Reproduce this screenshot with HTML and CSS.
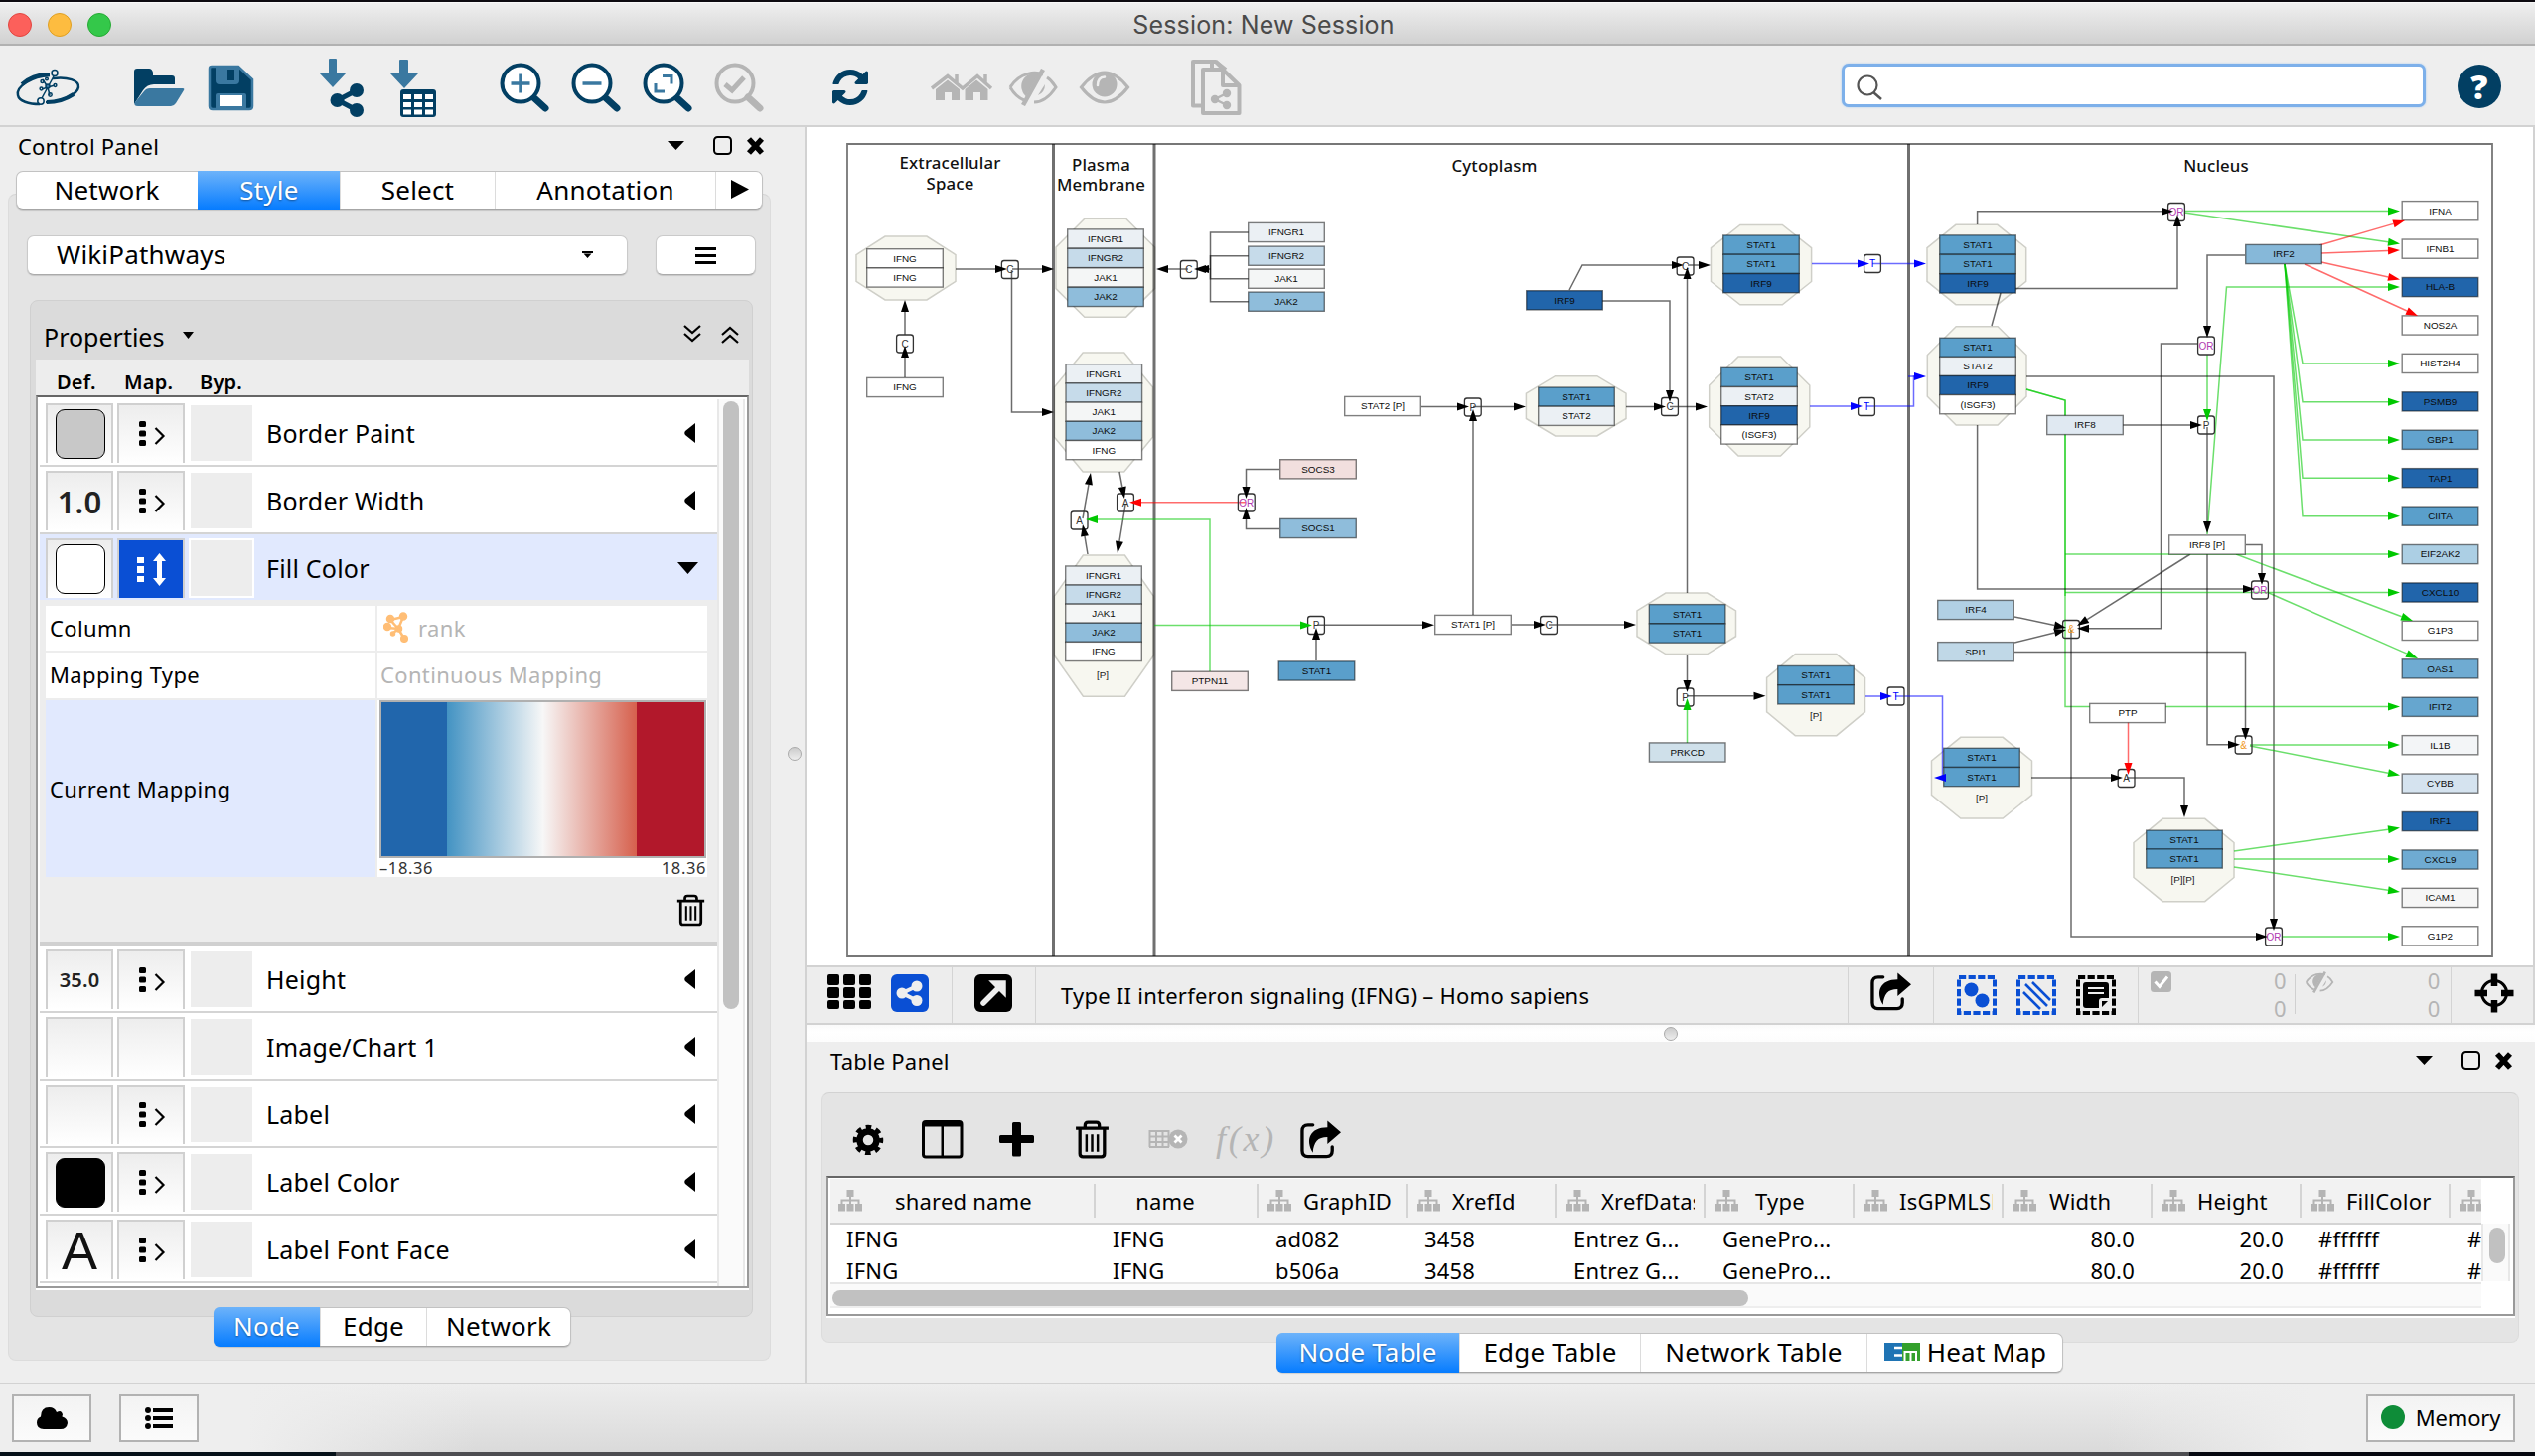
FILE: index.html
```html
<!DOCTYPE html>
<html lang="en">
<head>
<meta charset="utf-8">
<title>Session: New Session</title>
<link rel="stylesheet" href="styles.css">
</head>
<body>
<svg class="defs" aria-hidden="true">
  <symbol id="share" viewBox="0 0 42 39"><path d="M13 4.500H8Q2 4.500 2 10.500V31Q2 37 8 37H27Q33 37 33 31V27" fill="none" stroke="currentColor" stroke-width="3.400" stroke-linecap="round"/><path d="M28 0L42 12 28 24V17C18 17 14 22 13 33 5 20 10 7 28 7z" fill="currentColor"/></symbol>
  <symbol id="trash" viewBox="0 0 34 38"><path d="M1 8H33M10 7V5Q10 2 13 2H21Q24 2 24 5V7M5 9V33Q5 36 8 36H26Q29 36 29 33V9" fill="none" stroke="currentColor" stroke-width="3.200"/><path d="M11.500 14V31M17 14V31M22.500 14V31" stroke="currentColor" stroke-width="2.400"/></symbol>
  <symbol id="eyeoff" viewBox="0 0 50 38"><path d="M2 19C12 3 28 3 35 6M39 9C44 12 46 16 48 19 40 31 32 34 26 34M2 19C6 26 11 30 16 32" fill="none" stroke="currentColor" stroke-width="3"/><path d="M31 5C18 3 11 13 14 22 15 26 18 28 18 28z" fill="currentColor"/><path d="M35 1L15 37" stroke="currentColor" stroke-width="4.500"/><path d="M37 16Q37 24 30 27z" fill="currentColor"/></symbol>
  <symbol id="tree" viewBox="0 0 24 22"><path d="M8.500 0h7v7h-7zM0 14h7v7.500H0zM8.500 14h7v7.500h-7zM17 14h7v7.500h-7zM11 7h2v7h-2z" fill="#b4b4b4"/><path d="M3.500 14V10.500H20.500V14" fill="none" stroke="#b4b4b4" stroke-width="2"/></symbol>
  <symbol id="map" viewBox="0 0 27 26"><path d="M1.500 0h4q1.500 0 1.500 1.500v3q0 1.500-1.500 1.500h-4Q0 6 0 4.500v-3Q0 0 1.500 0zM1.500 9.500h4Q7 9.500 7 11v3q0 1.500-1.500 1.500h-4Q0 15.500 0 14v-3q0-1.500 1.500-1.500zM1.500 19h4Q7 19 7 20.500v3Q7 25 5.500 25h-4Q0 25 0 23.500v-3Q0 19 1.500 19z"/><path d="M16.500 7l8 8-8 8" fill="none" stroke="#000" stroke-width="2.200"/></symbol>
  <symbol id="left" viewBox="0 0 11 20"><path d="M11 0V20L1 12Q-.5 10 1 8z"/></symbol>
  <symbol id="dock" viewBox="0 0 98 22"><path d="M0 6H17L8.500 15z"/><rect x="47" y="2" width="17" height="17" rx="3.500" fill="none" stroke="#000" stroke-width="2"/><path d="M82 4L95 18M95 4L82 18" stroke="#000" stroke-width="5.500"/></symbol>
</svg>

<div class="desk-top"></div>
<header class="titlebar"><div class="lights"><i class="r"></i><i class="y"></i><i class="g"></i></div><span>Session: New Session</span></header>

<nav class="toolbar">
  <svg class="ic" style="width:68px;margin-left:14px" viewBox="14 46 68 80"><g fill="none" stroke="#023f63"><path d="M50 76C32 77 16 87 18 96 19 102 29 105 40 105" stroke-width="2.500"/><path d="M53 79C68 77 80 81 79 88 78 95 62 103 46 103" stroke-width="2.500"/><path d="M22 85Q34 74 50 75M74 95Q62 103 47 103" stroke-width="4"/><g stroke-width="1.500"><path d="M54 77L42 99M48 88L43 80M48 88L50 96M48 88L55 86M48 88L42 90"/><circle cx="55" cy="73.500" r="3"/><circle cx="41" cy="102" r="3.200"/><circle cx="48" cy="87" r="2" fill="#3a78a0"/><circle cx="42.500" cy="82" r="1.500"/><circle cx="47" cy="79.500" r="1.300"/><circle cx="50.500" cy="95.500" r="1.700"/><circle cx="55.500" cy="86" r="1.400"/><circle cx="41.500" cy="89.500" r="1.400"/></g></g></svg>
  <svg class="ic" style="width:60px;margin-left:48px" viewBox="130 46 60 80"><path d="M135 105V72q0-3 3-3h12q3 0 4 4v3h19q3 0 3 3v6h-21q-7 0-11 6z" fill="#023f63"/><path d="M145 92q2-3 6-3h33q2 0 1 2l-8 13q-2 3-5 3h-33q-5 0-3-4z" fill="#3a78a0"/></svg>
  <svg class="ic" style="width:54px;margin-left:16px" viewBox="206 46 54 80"><path d="M213 67H240L254 80V107Q254 110 251 110H214Q211 110 211 107V69Q211 67 213 67z" fill="#023f63" stroke="#3a78a0" stroke-width="2.500"/><path d="M217 67H241V81Q241 85 237 85H221Q217 85 217 81z" fill="#3a78a0"/><path d="M229 70h7v11h-7z" fill="#023f63"/><path d="M217 110V96Q217 94 219 94H246Q248 94 248 96V110z" fill="#3a78a0"/><path d="M221 96h23v11h-23z" fill="#fff"/></svg>
  <svg class="ic" style="width:52px;margin-left:58px" viewBox="318 46 52 80"><path d="M331 60q0-1 1-1h6q1 0 1 1v13h10l-14 15-14-15h10z" fill="#3a78a0"/><g fill="#023f63"><circle cx="359" cy="91" r="7"/><circle cx="339.500" cy="101" r="7"/><circle cx="359" cy="111" r="7"/></g><path d="M359 91L340 101 359 111" fill="none" stroke="#023f63" stroke-width="5"/></svg>
  <svg class="ic" style="width:50px;margin-left:22px" viewBox="392 46 50 80"><path d="M402 61q0-1 1-1h7q1 0 1 1v13h10l-14 15-14-15h9z" fill="#3a78a0"/><rect x="403" y="90" width="36" height="28" rx="3" fill="#023f63"/><path d="M406 95h8v5h-8zM417 95h8v5h-8zM428 95h8v5h-8zM406 103h8v5h-8zM417 103h8v5h-8zM428 103h8v5h-8zM406 110.500h8v5h-8zM417 110.500h8v5h-8zM428 110.500h8v5h-8z" fill="#fff"/></svg>
  <svg class="ic" style="width:56px;margin-left:58px" viewBox="500 46 56 80"><path d="M537 98L549 109" stroke="#023f63" stroke-width="7" stroke-linecap="round"/><circle cx="524" cy="84" r="18.500" fill="#fff" stroke="#023f63" stroke-width="4"/><path d="M514.500 84h19M524 74.500v19" stroke="#3a78a0" stroke-width="3.500"/></svg>
  <svg class="ic" style="width:56px;margin-left:16px" viewBox="500 46 56 80"><path d="M537 98L549 109" stroke="#023f63" stroke-width="7" stroke-linecap="round"/><circle cx="524" cy="84" r="18.500" fill="#fff" stroke="#023f63" stroke-width="4"/><path d="M514.500 84h19" stroke="#3a78a0" stroke-width="3.500"/></svg>
  <svg class="ic" style="width:56px;margin-left:16px" viewBox="500 46 56 80"><path d="M537 98L549 109" stroke="#023f63" stroke-width="7" stroke-linecap="round"/><circle cx="524" cy="84" r="18.500" fill="#fff" stroke="#023f63" stroke-width="4"/><path d="M523 76.500h9v8M525 92h-9v-8" fill="none" stroke="#3a78a0" stroke-width="3"/></svg>
  <svg class="ic" style="width:56px;margin-left:16px" viewBox="500 46 56 80"><path d="M537 98L549 109" stroke="#b5b5b5" stroke-width="7" stroke-linecap="round"/><circle cx="524" cy="84" r="18.500" fill="none" stroke="#b5b5b5" stroke-width="4"/><path d="M514 85l7 6 12-13" fill="none" stroke="#b5b5b5" stroke-width="5"/></svg>
  <svg class="ic" style="width:44px;margin-left:62px" viewBox="834 46 44 80"><path transform="translate(838 70) scale(.02344)" fill="#023f63" d="M1511 928q0 5-1 7q-64 268-268 434.500T764 1536q-146 0-282.500-55T238 1324l-129 129q-19 19-45 19t-45-19T0 1408V960q0-26 19-45t45-19h448q26 0 45 19t19 45t-19 45l-137 137q71 66 161 102t187 36q134 0 250-65t186-179q11-17 53-117q8-23 30-23h192q13 0 22.500 9.500t9.500 22.500zm25-800v448q0 26-19 45t-45 19h-448q-26 0-45-19t-19-45t19-45l138-138Q969 256 768 256q-134 0-250 65T332 500q-11 17-53 117q-8 23-30 23H50q-13 0-22.500-9.500T18 608v-7q65-268 270-434.500T768 0q146 0 284 55.500T1297 212l130-129q19-19 45-19t45 19t19 45z"/></svg>
  <svg class="ic" style="width:68px;margin-left:56px" viewBox="934 46 68 80"><path d="M938 89L954 76.500 969 89 984 76.500 998 89M963 83v-8M992 83v-8" fill="none" stroke="#b5b5b5" stroke-width="3.500"/><path d="M942 90l12-9.500L966 90v11h-8v-8h-7v8h-9zM971.500 90L983 80.500 994.500 90v11H987v-8h-7v8h-8.500z" fill="#b5b5b5"/></svg>
  <svg class="ic grey" style="width:56px;margin-left:10px" viewBox="1012 46 56 80"><use href="#eyeoff" x="1015" y="69" width="50" height="38"/></svg>
  <svg class="ic" style="width:56px;margin-left:16px" viewBox="1084 46 56 80"><path d="M1088.500 88Q1112 58 1135.500 88 1112 118 1088.500 88z" fill="none" stroke="#b5b5b5" stroke-width="3.200"/><circle cx="1112" cy="85" r="12.500" fill="#b5b5b5"/><path d="M1105 86q0-8 7-8.500" fill="none" stroke="#eee" stroke-width="2.500" stroke-linecap="round"/></svg>
  <svg class="ic" style="width:56px;margin-left:56px" viewBox="1196 46 56 80"><g fill="none" stroke="#b5b5b5" stroke-width="4" stroke-linejoin="round"><path d="M1209 106.500h-8V62h23l6 6M1220 62v7"/><path d="M1211 70h20l16.500 16V114H1211zM1231 70v16h16M1224 62l10 8"/></g><g fill="#b5b5b5"><circle cx="1235" cy="94" r="4.200"/><circle cx="1223" cy="100" r="4.200"/><circle cx="1235" cy="106" r="4.200"/></g><path d="M1235 94l-12 6 12 6" fill="none" stroke="#b5b5b5" stroke-width="2.500"/></svg>
  <div class="search"><svg width="27" height="27" viewBox="0 0 27 27"><circle cx="11" cy="11" r="9.500" fill="none" stroke="#555" stroke-width="2.200"/><path d="M17 18l8 7" stroke="#555" stroke-width="2.500"/></svg></div>
  <div class="help">?</div>
</nav>

<main>
<section class="left">
  <div class="phead"><span>Control Panel</span><svg width="98" height="22"><use href="#dock"/></svg></div>
  <div class="seg main-tabs"><b style="width:183px">Network</b><b class="on" style="width:143px">Style</b><b style="width:156px">Select</b><b style="width:222px">Annotation</b><b style="width:48px"><svg width="18" height="19"><path d="M0 0V19L18 9.500z"/></svg></b></div>
  <div class="group">
    <div class="combo-row"><div class="combo"><span>WikiPathways</span><svg width="11" height="7"><path d="M0 0H11V2H0zM1.500 2.500H9.500L5.500 7z"/></svg></div><div class="burger"><i></i><i></i><i></i></div></div>
    <div class="props">
      <div class="props-head"><span>Properties</span><svg width="11" height="7"><path d="M0 0H11L5.500 7z"/></svg><svg class="chev" width="60" height="20"><path d="M2 1l8 7 8-7M2 9l8 7 8-7M40 10l8-7 8 7M40 18l8-7 8 7" fill="none" stroke="#000" stroke-width="2.200"/></svg></div>
      <div class="cols"><span style="width:68px">Def.</span><span style="width:76px">Map.</span><span style="width:60px">Byp.</span></div>
      <div class="list">
        <div class="rows">
          <div class="row"><span class="cell"><i class="sw" style="background:#c8c8c8"></i></span><span class="cell"><svg width="27" height="26"><use href="#map"/></svg></span><span class="byp"></span><em>Border Paint</em><svg class="tri" width="11" height="20"><use href="#left"/></svg></div>
          <div class="row"><span class="cell big">1.0</span><span class="cell"><svg width="27" height="26"><use href="#map"/></svg></span><span class="byp"></span><em>Border Width</em><svg class="tri" width="11" height="20"><use href="#left"/></svg></div>
          <div class="row sel"><span class="cell"><i class="sw" style="background:#fff"></i></span><span class="cell blue"><svg width="29" height="33" fill="#fff"><path d="M0 4h7v6H0zM0 13h7v7H0zM0 23h7v6H0zM22.500 0L29 8H25V25h4l-6.500 8L16 25h4V8H16z"/></svg></span><span class="byp"></span><em>Fill Color</em><svg class="tri down" width="21" height="12"><path d="M0 0H21L10.500 12z"/></svg></div>
          <div class="detail">
            <div class="dt">
              <span>Column</span><span class="dim"><svg width="26" height="31" stroke="#ffbe76" stroke-width="2.500" fill="#ffbe76"><path d="M15 17L7 8 20 5 15 17 4 16M15 17L9 22M15 17L21 27" fill="none"/><circle cx="7" cy="7" r="3"/><circle cx="20" cy="4.500" r="3"/><circle cx="4" cy="15" r="3"/><circle cx="15.500" cy="17" r="2.500"/><circle cx="9.500" cy="22" r="1.500"/><circle cx="21" cy="27" r="2.800"/></svg>rank</span>
              <span>Mapping Type</span><span class="dim">Continuous Mapping</span>
              <span class="cur">Current Mapping</span><span class="grad"><i></i><u><s>–18.36</s><s>18.36</s></u></span>
            </div>
            <svg class="bin" width="29" height="33"><use href="#trash"/></svg>
          </div>
          <div class="row"><span class="cell mid">35.0</span><span class="cell"><svg width="27" height="26"><use href="#map"/></svg></span><span class="byp"></span><em>Height</em><svg class="tri" width="11" height="20"><use href="#left"/></svg></div>
          <div class="row"><span class="cell"></span><span class="cell"></span><span class="byp"></span><em>Image/Chart 1</em><svg class="tri" width="11" height="20"><use href="#left"/></svg></div>
          <div class="row"><span class="cell"></span><span class="cell"><svg width="27" height="26"><use href="#map"/></svg></span><span class="byp"></span><em>Label</em><svg class="tri" width="11" height="20"><use href="#left"/></svg></div>
          <div class="row"><span class="cell"><i class="sw" style="background:#000"></i></span><span class="cell"><svg width="27" height="26"><use href="#map"/></svg></span><span class="byp"></span><em>Label Color</em><svg class="tri" width="11" height="20"><use href="#left"/></svg></div>
          <div class="row"><span class="cell face">A</span><span class="cell"><svg width="27" height="26"><use href="#map"/></svg></span><span class="byp"></span><em>Label Font Face</em><svg class="tri" width="11" height="20"><use href="#left"/></svg></div>
        </div>
        <div class="vbar"><i></i></div>
      </div>
    </div>
  </div>
  <div class="seg sub-tabs"><b class="on" style="width:107px">Node</b><b style="width:107px">Edge</b><b style="width:145px">Network</b></div>
</section>
<div class="knob side"></div>

<section class="right">
  <svg id="network" class="net" viewBox="812 128 1738 844"></svg>
  <div class="netbar">
    <div class="nb" style="width:147px;padding-left:21px"><svg width="103" height="38"><path d="M2 0h8q2 0 2 2v7q0 2-2 2H2Q0 11 0 9V2Q0 0 2 0zM18 0h8q2 0 2 2v7q0 2-2 2h-8q-2 0-2-2V2q0-2 2-2zM34 0h8q2 0 2 2v7q0 2-2 2h-8q-2 0-2-2V2q0-2 2-2zM2 13h8q2 0 2 2v7q0 2-2 2H2q-2 0-2-2v-7q0-2 2-2zM18 13h8q2 0 2 2v7q0 2-2 2h-8q-2 0-2-2v-7q0-2 2-2zM34 13h8q2 0 2 2v7q0 2-2 2h-8q-2 0-2-2v-7q0-2 2-2zM2 26h8q2 0 2 2v5q0 2-2 2H2q-2 0-2-2v-5q0-2 2-2zM18 26h8q2 0 2 2v5q0 2-2 2h-8q-2 0-2-2v-5q0-2 2-2zM34 26h8q2 0 2 2v5q0 2-2 2h-8q-2 0-2-2v-5q0-2 2-2z"/><rect x="64" width="38" height="38" rx="6" fill="#0a4fd4"/><g fill="#eee"><circle cx="90" cy="12" r="5.500"/><circle cx="75" cy="19" r="5.500"/><circle cx="90" cy="26.500" r="5.500"/></g><path d="M90 12L75 19 90 26.500" fill="none" stroke="#eee" stroke-width="4"/></svg></div>
    <div class="nb" style="width:84px;padding-left:22px"><svg width="38" height="38"><rect width="38" height="38" rx="6"/><path d="M9 29L25 13" stroke="#eee" stroke-width="5.500" stroke-linecap="round"/><path d="M16 7H31V22z" fill="#eee" stroke="#eee" stroke-width="1.500"/></svg></div>
    <div class="nb name">Type II interferon signaling (IFNG) – Homo sapiens</div>
    <div class="nb" style="width:86px;padding:0 0 8px 22px"><svg width="41" height="39"><use href="#share"/></svg></div>
    <div class="nb sels" style="width:206px;padding-left:23px">
      <svg width="40" height="40" fill="#0a4fd4"><rect x="2" y="2" width="36" height="36" fill="none" stroke="#0a4fd4" stroke-width="4" stroke-dasharray="7.200 2.400"/><circle cx="14.500" cy="14.500" r="7"/><circle cx="25.500" cy="25.500" r="7"/></svg>
      <svg width="40" height="40"><rect x="2" y="2" width="36" height="36" fill="none" stroke="#0a4fd4" stroke-width="4" stroke-dasharray="7.200 2.400"/><path d="M16 7L34 25M9 9L31 31M7 17L24 34" stroke="#0a4fd4" stroke-width="2.500"/></svg>
      <svg width="40" height="40"><rect x="2" y="2" width="36" height="36" fill="none" stroke="#000" stroke-width="4" stroke-dasharray="7.200 2.400"/><path d="M10 7H30Q33 7 33 10V23H26Q23 23 23 26V33H10Q7 33 7 30V10Q7 7 10 7zM26 32V26H32z"/><path d="M12 13H28M12 18H28" stroke="#eee" stroke-width="2.200"/></svg>
    </div>
    <div class="nb counts" style="width:315px"><svg width="21" height="21"><rect width="21" height="21" rx="3.500" fill="#b5b5b5"/><path d="M4.500 10.500l4.500 5 8-10" fill="none" stroke="#fff" stroke-width="3"/></svg><p>0<br>0</p><i></i><svg class="grey" width="30" height="22"><use href="#eyeoff"/></svg><p class="hid">0<br>0</p></div>
    <div class="nb" style="width:84px;padding-left:23px"><svg width="40" height="40"><circle cx="20" cy="20" r="12.500" fill="none" stroke="#000" stroke-width="3"/><path d="M20 0.500V13M20 27V39.500M.5 20H13M27 20H39.500" stroke="#000" stroke-width="6.500"/></svg></div>
  </div>
  <div class="strip"><div class="knob"></div></div>
  <div class="phead tp"><span>Table Panel</span><svg width="98" height="22"><use href="#dock"/></svg></div>
  <div class="tgroup">
    <div class="tbar">
      <svg width="32" height="32" style="margin-left:26px"><g fill="none" stroke="#000"><circle cx="16" cy="17" r="8.500" stroke-width="6.500"/><circle cx="16" cy="17" r="13" stroke-width="4.500" stroke-dasharray="5.500 4.710" stroke-dashoffset="2.700"/></g></svg>
      <svg width="42" height="39" style="margin-left:38px"><rect x="1.500" y="1.500" width="38.500" height="35.500" rx="2.500" fill="none" stroke="#000" stroke-width="3"/><path d="M1 1H40V6.500H1zM19.500 2h2.500V37h-2.500z"/></svg>
      <svg width="36" height="35" style="margin-left:36px"><path d="M13 1.500q0-1.500 1.500-1.500h6q1.500 0 1.500 1.500V13H33.500q1.500 0 1.500 1.500v5q0 1.500-1.500 1.500H22V33q0 1.500-1.500 1.500h-6Q13 34.500 13 33V21H1.500Q0 21 0 19.500v-5Q0 13 1.500 13H13z"/></svg>
      <svg width="35" height="39" style="margin-left:40px"><use href="#trash"/></svg>
      <svg width="40" height="21" style="margin-left:39px"><path d="M1 2h20M1 7.500h20M1 13h20M1 18h20M1.500 1v17M8 1v17M14.500 1v17M20.500 1v17" stroke="#b5b5b5" stroke-width="2"/><circle cx="30" cy="10" r="9.500" fill="#b5b5b5"/><path d="M26.500 6.500l7 7M33.500 6.500l-7 7" stroke="#fff" stroke-width="2.800"/></svg>
      <span class="fx">f(x)</span>
      <svg width="41" height="39"><use href="#share"/></svg>
    </div>
    <div class="table">
      <div class="tmain">
        <div class="tr th"><span><svg><use href="#tree"/></svg>shared name</span><span class="c2">name</span><span><svg><use href="#tree"/></svg>GraphID</span><span><svg><use href="#tree"/></svg>XrefId</span><span><svg><use href="#tree"/></svg><q>XrefDatas</q></span><span><svg><use href="#tree"/></svg>Type</span><span><svg><use href="#tree"/></svg><q>IsGPMLSh</q></span><span><svg><use href="#tree"/></svg>Width</span><span><svg><use href="#tree"/></svg>Height</span><span><svg><use href="#tree"/></svg>FillColor</span><span><svg><use href="#tree"/></svg></span></div>
        <div class="tr td"><span>IFNG</span><span>IFNG</span><span>ad082</span><span>3458</span><span>Entrez G...</span><span>GenePro...</span><span></span><span class="n">80.0</span><span class="n">20.0</span><span>#ffffff</span><span>#</span></div>
        <div class="tr td"><span>IFNG</span><span>IFNG</span><span>b506a</span><span>3458</span><span>Entrez G...</span><span>GenePro...</span><span></span><span class="n">80.0</span><span class="n">20.0</span><span>#ffffff</span><span>#</span></div>
        <div class="hbar"><i></i></div>
      </div>
      <div class="tside"><div class="tv"><i></i></div></div>
    </div>
  </div>
  <div class="seg table-tabs"><b class="on" style="width:184px">Node Table</b><b style="width:182px">Edge Table</b><b style="width:228px">Network Table</b><b style="width:198px"><svg width="36" height="18"><path d="M0 0h18v18H0z" fill="#1f74b4"/><path d="M18 0h18v18H18z" fill="#33a02c"/><path d="M10 5h8M10 12.500h8" stroke="#fff" stroke-width="2.500"/><path d="M20.500 18V9h11.500v9M26.500 9v9" fill="none" stroke="#fff" stroke-width="2"/></svg>Heat Map</b></div>
</section>
</main>

<footer>
  <div class="sb"><svg width="31" height="23"><path d="M7 22Q0 22 0 15.500 0 11 4 9.500 4 0 12.500 0 18 0 20 5q5-3 6 2.500-.5 1-.5 2Q31 11 31 16q-1 6-7 6z"/></svg></div>
  <div class="sb two"><svg width="29" height="22"><path d="M8 3h20M8 11h20M8 19h20" stroke="#000" stroke-width="4"/><circle cx="3" cy="3" r="3"/><circle cx="3" cy="11" r="3"/><circle cx="3" cy="19" r="3"/></svg></div>
  <div class="sb mem"><i></i>Memory</div>
</footer>
<div class="desk-bottom"></div>
<script src="network.js"></script>
</body>
</html>
```
FILE: styles.css
```css
*{box-sizing:border-box}
body{margin:0;width:2552px;height:1466px;overflow:hidden;display:flex;flex-direction:column;background:#eee;color:#000;font-family:"Noto Sans","Open Sans",sans-serif;font-size:22px;letter-spacing:.2px;line-height:1}
svg{display:block;flex:none}
b,em,i,u,s{font-weight:400;font-style:normal;text-decoration:none}
.defs{display:none}
.grey{color:#b5b5b5}
.desk-top{height:2px;background:#0d0a10;flex:none}
.titlebar{height:44px;flex:none;display:grid;grid-template-columns:1fr auto 1fr;align-items:center;background:linear-gradient(#efefef,#d1d1d1);border-bottom:2px solid #b1b1b1;border-top:1px solid #f8f8f8;padding-right:8px}
.titlebar span{font:25px/1 Inter,sans-serif;color:#4a4a4a;letter-spacing:.15px;padding-top:3px}
.lights{display:flex;gap:16px;padding-left:8px;padding-top:2px}
.lights i{width:24px;height:24px;border-radius:50%;border:1px solid #e14640;background:#fc605b}
.lights .y{background:#fdbc40;border-color:#dfa023}
.lights .g{background:#34c84a;border-color:#27aa35}
.toolbar{height:82px;flex:none;display:flex;align-items:center;border-bottom:2px solid #d2d2d2}
.ic{height:80px}
.search{margin-left:602px;width:588px;height:44px;border:3px solid #7db0ea;border-radius:7px;background:#fff;box-shadow:0 0 2px #9cc4f0;padding:8px 12px}
.help{margin-left:32px;width:44px;height:44px;border-radius:50%;background:#023f63;color:#fff;font:900 34px/44px "Noto Sans",sans-serif;text-align:center;margin-top:2px}
main{display:flex;height:1264px;flex:none}
.left{width:784px;flex:none;display:flex;flex-direction:column}
.phead{height:44px;flex:none;display:flex;justify-content:space-between;align-items:center;padding:0 14px 6px 18px}
.seg{display:flex;flex:none;height:39px;position:relative;z-index:1;border:1px solid #c2c2c2;border-bottom-color:#a6a6a6;border-radius:7px;background:#fff;box-shadow:0 1px 1px #0002;font-size:26px}
.seg b{display:flex;flex:none;align-items:center;justify-content:center;border-left:1px solid #dcdcdc;padding-bottom:2px;gap:7px;white-space:nowrap}
.seg b:first-child{border-left:0;border-radius:6px 0 0 6px;margin-left:-1px}
.seg .on{background:linear-gradient(#6db3fa,#067cff);color:#fff;border-color:transparent;text-shadow:0 1px 2px #0006;margin-top:-1px;margin-bottom:-1px}
.main-tabs{margin-left:16px;width:752px}
.group{margin:-16px 0 0 8px;width:768px;height:1175px;flex:none;background:#e4e4e4;border:1px solid #dcdcdc;border-top-color:#d4d4d4;border-radius:8px;padding-top:41px}
.combo-row{display:flex;gap:28px;padding-left:18px}
.combo,.burger{height:40px;background:#fff;border:1px solid #cacaca;border-bottom-color:#aaa;border-radius:7px;box-shadow:0 1px 1px #0002}
.combo{width:605px;display:flex;align-items:center;justify-content:space-between;padding:0 34px 2px 29px;font-size:26px}
.burger{width:101px;display:flex;flex-direction:column;gap:4px;align-items:center;justify-content:center}
.burger i{width:21px;height:3px;background:#000}
.props{margin:25px 0 0 21px;width:728px;height:1024px;background:#dbdbdb;border:1px solid #d0d0d0;border-radius:8px;padding:0 3px 0 5px}
.props-head{height:59px;display:flex;align-items:center;font-size:25px;letter-spacing:0;padding:13px 7px 0 8px}
.props-head span{margin-right:19px;line-height:30px}
.props-head svg{margin-bottom:4px}
.props-head .chev{margin-left:auto}
.cols{height:36px;background:#ededed;display:flex;font-weight:600;font-size:20px;padding:13px 0 0 21px}
.list{height:899px;border:2px solid #999;border-top-color:#666;background:#fff;display:flex;justify-content:space-between;padding:2px 2px 0 2px;box-shadow:0 2px 0 #fff}
.rows{width:682px;flex:none}
.row{height:68px;border-bottom:2px solid #d4d4d4;padding:4px 22px 2px 6px;display:flex;font-size:26px}
.cell{width:68px;flex:none;margin-right:4px;border:2px solid #d0d0d0;border-bottom:0;background:linear-gradient(#ededed,#fff);display:flex;align-items:center;justify-content:center}
.sw{width:50px;height:50px;border:1.500px solid #000;border-radius:9px;margin-left:1px}
.cell svg{margin-left:2px}
.byp{width:66px;flex:none;border:2px solid #fff;background:#ededed;margin-right:12px}
.row em{align-self:center;font-size:25px;letter-spacing:.2px}
.tri{margin:20px 0 0 auto}
.down{margin:24px -3px 0 auto}
.sel{height:66px;background:#e1e9fe;border:0}
.cell.blue{background:#0a4fd4}
.blue svg{margin:0}
.big{font-weight:600;font-size:31px;color:#222}
.mid{font-weight:600;font-size:20px;color:#222}
.face{font:54px/1 "Liberation Sans",sans-serif;color:#111}
.detail{height:348px;background:#ededed;border-bottom:4px solid #d0d0d0;padding:6px 9px 0 6px;display:flex;flex-direction:column}
.dt{display:grid;grid-template-columns:332px 332px;grid-template-rows:45px 46px 178px;gap:2px;letter-spacing:.35px}
.dt>span{background:#fff;display:flex;align-items:center;padding:0 4px 2px 4px}
.dt .dim{color:#b5b5b5;gap:9px;padding-left:3px}
.dt .dim svg{margin-left:3px}
.dt .cur{background:#e1e9fe;padding-bottom:1px}
.dt .grad{flex-direction:column;align-items:stretch;padding:0 1px 0 2px}
.grad i{height:160px;border:2px solid #b0b0b0;background:linear-gradient(90deg,#2166ac 66px,#4393c3 66px,#f7f7f7 50%,#d6604d 257px,#b2182b 257px)}
.grad u{display:flex;justify-content:space-between;font-size:16.500px;line-height:19px;color:#333;letter-spacing:.6px}
.bin{align-self:flex-end;margin:17px 3px 0 0}
.vbar{width:28px;flex:none;border:2px solid #e8e8e8;border-width:0 2px;background:#fafafa;padding:2px 4px}
.vbar i{display:block;height:612px;width:16px;border-radius:8px;background:#c1c1c1}
.sub-tabs{margin:-54px 0 0 215px;width:360px;height:40px}
.knob{width:14px;height:14px;border-radius:50%;border:1px solid #aaa;background:linear-gradient(#ccc,#eee)}
.side{margin:624px 3px 0 9px;flex:none}
.right{flex:1;display:flex;flex-direction:column;border-left:2px solid #d2d2d2;min-width:0}
.net{width:1740px;height:844px;background:#fff;border-right:2px solid #d2d2d2}
.netbar{height:60px;flex:none;display:flex;border-top:2px solid #d2d2d2;border-bottom:2px solid #d2d2d2;background:#ededed}
.nb{display:flex;align-items:center;border-right:1px solid #d4d4d4;flex:none;padding-bottom:5px}
.nb:last-child{border-right:2px solid #d4d4d4}
.name{flex:1;padding-left:25px;padding-bottom:1px;letter-spacing:.24px}
.sels{gap:20px;padding-bottom:1px}
.counts{color:#b5b5b5;align-items:flex-start;padding:4px 0 0 12px}
.counts p{margin:-5px 0 0 103px;line-height:28px}
.counts .hid{margin-left:94px}
.counts i{width:1px;height:40px;background:#d0d0d0;margin:3px 9px 0 8px}
.strip{height:17px;flex:none;background:linear-gradient(#fafafa,#fff 40%,#fdfdfd);display:flex;justify-content:center;padding-top:2px}
.tp{height:51px;padding:0 22px 13px 24px}
.tgroup{margin:0 16px 0 15px;height:252px;flex:none;background:#e4e4e4;border:1px solid #dcdcdc;border-top-color:#d2d2d2;border-radius:8px;padding:0 3px 0 4px}
.tbar{height:83px;display:flex;align-items:center;padding-top:9px}
.fx{font:italic 36px/1 "Liberation Serif",serif;color:#b5b5b5;width:85px;margin:0 0 0 28px;letter-spacing:2.800px}
.table{height:141px;border:2px solid #999;border-top-color:#666;background:#fff;box-shadow:0 2px 0 #fff;display:flex;padding:1px 2px 0}
.tmain{width:1662px;flex:none;overflow:hidden}
.tr{display:grid;grid-template-columns:267px 164px repeat(9,150px);white-space:nowrap}
.th{height:46px;background:#f2f2f2;border-bottom:2px solid #d4d4d4;align-items:center}
.th span{height:34px;border-right:2px solid #d4d4d4;display:flex;align-items:center;padding-right:9px}
.th q{quotes:none;overflow:hidden;line-height:30px;width:95px}
.th span+span svg{margin-right:12px;margin-left:9px}
.th svg{width:24px;height:22px;margin:0 33px 0 8px}
.th .c2{justify-content:center;padding-right:22px}
.td{height:32px}
.td span{padding:0 0 0 17px;line-height:28px}
.td span:first-child{padding-left:16px}
.td .n{text-align:right;padding-right:18px}
.th span:nth-child(6) svg{margin-right:17px}
.th span:nth-child(8) svg{margin-right:13px}
.hbar{border-top:2px solid #e6e6e6;border-bottom:2px solid #eee;background:#fafafa;height:26px;margin-top:-6px;padding:6px 2px}
.tside{padding-top:45px}
.tv{width:29px;height:58px;border:2px solid #e8e8e8;border-width:0 2px;background:#fafafa;padding:4px 6px}
.tv i{display:block;width:16px;height:36px;border-radius:8px;background:#c1c1c1}
.hbar i{display:block;width:922px;height:16px;border-radius:8px;background:#c1c1c1}
.table-tabs{margin:-10px 0 0 473px;width:792px;height:40px}
footer{height:70px;flex:none;border-top:2px solid #d2d2d2;display:flex;align-items:center;padding:0 20px 0 12px;background:linear-gradient(90deg,#eee 250px,#eee0 480px,#eee0 2120px,#eee 2330px),linear-gradient(#ededed,#dadada)}
.sb{width:80px;height:48px;border:2px solid #b2b2b2;background:linear-gradient(#f3f3f3,#fbfbfb);display:flex;align-items:center;justify-content:center}
.two{margin-left:28px}
.mem{width:150px;margin-left:auto;gap:11px;letter-spacing:-.2px;padding-bottom:2px}
.mem i{width:24px;height:24px;border-radius:50%;background:#0e8c38}
.desk-bottom{height:4px;flex:none;background:linear-gradient(90deg,#061119 338px,#4d4d51 338px,#4d4d51 2204px,#060810 2204px)}
```
FILE: network.js
```
const svg = document.getElementById('network');
const K = '#000', G = '#00c800', R = '#f00', B = '#00f';
const C = {s1:'#5a9fcb', s2:'#ebf0f4', d:'#2165ab', w:'#fff', g1:'#ebf0f4', g2:'#c6dbea', j1:'#f4f6f6', j2:'#8fbddb'};
const layer = {oct:'', line:'', box:'', sq:'', head:''};

function text(x, y, t, size, fill) {
  return `<text x="${x}" y="${y}" font-size="${size}" fill="${fill}" text-anchor="middle">${t}</text>`;
}
function oct(x1, y1, x2, y2) {
  const a = (x2 - x1) * .29, b = (y2 - y1) * .29;
  layer.oct += `<polygon points="${x1+a},${y1} ${x2-a},${y1} ${x2},${y1+b} ${x2},${y2-b} ${x2-a},${y2} ${x1+a},${y2} ${x1},${y2-b} ${x1},${y1+b}" fill="#f7f7f0" stroke="#cfcfc8" stroke-width="1.5"/>`;
}
function box(cx, cy, label, fill) {
  layer.box += `<rect x="${cx-38.3}" y="${cy-9.6}" width="76.6" height="19.2" fill="${fill}" stroke="#000" stroke-opacity=".5" stroke-width="1.4"/>` + text(cx, cy + 3.4, label, 9.9, '#0c0c0c');
}
function stack(cx, top, step, items) {
  items.forEach(([l, f], i) => box(cx, top + step * (i + .5), l, f));
}
function note(x, y, t) { layer.box += text(x, y, t, 9.9, '#222'); }
function sq(cx, cy, l, fill = '#333') {
  layer.sq += `<rect x="${cx-8.4}" y="${cy-9}" width="16.8" height="18" rx="2.500" fill="none" stroke="#333" stroke-width="1.3"/>` + text(cx, cy + 3.8, l, 10, fill);
}
function line(color, pts, arrow = true) {
  const p = pts.map(q => [...q]);
  const n = p.length, [x, y] = p[n-1], [u, v] = p[n-2];
  if (arrow) {
    const L = Math.hypot(x-u, y-v), dx = (x-u)/L, dy = (y-v)/L, bx = x-dx*12, by = y-dy*12;
    layer.head += `<polygon points="${x},${y} ${bx-dy*4},${by+dx*4} ${bx+dy*4},${by-dx*4}" fill="${color}"/>`;
    p[n-1] = [bx, by];
  }
  layer.line += `<polyline points="${p.join(' ')}" fill="none" stroke="${color}" stroke-opacity=".58" stroke-width="1.5"/>`;
}

// extracellular space and plasma membrane
oct(862,238,962,302); stack(911,250.7,19.2,[['IFNG',C.w],['IFNG',C.w]]);
box(911,390,'IFNG',C.w);
line(K,[[911,380],[911,348]]); sq(911,346,'C'); line(K,[[911,337],[911,302]]);
line(K,[[962,271],[1014,271]]); sq(1016.8,271.5,'C'); line(K,[[1019,271],[1061,271]]);
line(K,[[1018.5,272],[1018.5,415],[1061,415]]);
oct(1063,220.3,1162.5,319.3); stack(1113,230.7,19.5,[['IFNGR1',C.g1],['IFNGR2',C.g2],['JAK1',C.j1],['JAK2',C.j2]]);
oct(1061.5,355,1160.4,475); stack(1111.3,366.7,19.2,[['IFNGR1',C.g1],['IFNGR2',C.g2],['JAK1',C.j1],['JAK2',C.j2],['IFNG',C.w]]);
oct(1061.4,559,1161.4,701.3); stack(1111,570,19.1,[['IFNGR1',C.g1],['IFNGR2',C.g2],['JAK1',C.j1],['JAK2',C.j2],['IFNG',C.w]]); note(1110,683,'[P]');
line(K,[[1127,475],[1132,502]]); sq(1133,506,'A'); line(K,[[1133,508],[1125,557]]);
line(K,[[1095,558],[1090,528]]); sq(1086.6,524,'A'); line(K,[[1090,522],[1098,476]]);

// receptor components and SOCS feedback
[[234,'IFNGR1',C.g1],[257.7,'IFNGR2',C.g2],[280.7,'JAK1',C.j1],[303.7,'JAK2',C.j2]].forEach(([y,l,f]) => {
  box(1295,y,l,f); line(K,[[1257,y],[1218.5,y],[1218.5,271]],false);
});
line(K,[[1218.500,271],[1202,271]]); line(K,[[1215,271],[1205,271]]); sq(1196.8,271.5,'C'); line(K,[[1196,271],[1164,271]]);
box(1327,472.3,'SOCS3','#f2dfde'); box(1327,532,'SOCS1',C.j2);
line(K,[[1288,472.5],[1254.500,472.5],[1254.500,502]]); line(K,[[1288,532.5],[1254.500,532.5],[1254.500,511]]);
sq(1254.8,506,'OR','#b03ab0'); line(R,[[1254,505.7],[1137,505.7]]);
line(G,[[1218,676],[1218,523],[1093,523]]);
box(1218,685.8,'PTPN11','#f4e6e6');
line(G,[[1162,629.5],[1321,629.5]]); sq(1325,629.5,'P'); box(1325.5,675.5,'STAT1',C.s1);
line(K,[[1325,665],[1325,632]]); line(K,[[1326,629.3],[1444,629.3]]);

// cytoplasm
box(1483,629,'STAT1 [P]',C.w); box(1392,409,'STAT2 [P]',C.w);
line(K,[[1483,619],[1483,412]]); line(K,[[1431,409.5],[1479,409.5]]); sq(1482.8,410,'P'); line(K,[[1483,409.5],[1536,409.5]]);
oct(1536.4,378.7,1637,439); stack(1587,390,19.2,[['STAT1',C.s1],['STAT2',C.s2]]);
line(K,[[1522,629],[1556,629]]); sq(1559,629.5,'C'); line(K,[[1559,629],[1647,629]]);
line(K,[[1637,409.5],[1677,409.5]]); sq(1681,409.5,'C'); line(K,[[1681,409.5],[1719,409.5]]);
box(1575,302.3,'IRF9',C.d);
line(K,[[1580,292],[1593,267],[1695,267]]); line(K,[[1613,303],[1681,303],[1681,405]]);
sq(1696.6,268,'C'); line(K,[[1699,267],[1722,267]]);
line(K,[[1698.500,597],[1698.500,269]]);
oct(1722.5,226.4,1823.6,306.8); stack(1773,236.9,19.3,[['STAT1',C.s1],['STAT1',C.s1],['IRF9',C.d]]);
line(B,[[1824,265.5],[1882,265.5]]); sq(1885,265.5,'T',B); line(B,[[1885,265.5],[1939,265.5]]);
oct(1720.7,359,1821.8,459); stack(1771,370.3,19.2,[['STAT1',C.s1],['STAT2',C.s2],['IRF9',C.d],['(ISGF3)',C.w]]);
line(B,[[1822,409],[1875,409]]); sq(1879,409.5,'T',B); line(B,[[1879,409],[1926.500,409],[1926.500,379],[1939,379]]);
line(B,[[1921,379],[1927,379]],false);
oct(1648,597,1747.5,658.6); stack(1698.6,608.5,19.4,[['STAT1',C.s1],['STAT1',C.s1]]);
line(K,[[1698.500,659],[1698.500,697]]); sq(1696.6,702,'P'); line(K,[[1698,700.7],[1777.5,700.7]]);
line(G,[[1698.500,748],[1698.500,703]]); box(1698.7,757.5,'PRKCD','#cfe0ea');
oct(1778.6,658.6,1877.5,740.7); stack(1828,670.4,19.3,[['STAT1',C.s1],['STAT1',C.s1]]); note(1828,723.5,'[P]');
line(B,[[1878,701],[1905,701]]); sq(1908.6,701,'T',B); line(B,[[1908,701],[1955.500,701],[1955.500,783],[1947,783]]);

// nucleus
oct(1940,226.3,2039.7,306.7); stack(1991,236.7,19.5,[['STAT1',C.s1],['STAT1',C.s1],['IRF9',C.d]]);
line(K,[[1990.6,226],[1990.6,212.7],[2188,212.7]]); line(K,[[2029,290.500],[2192,290.500],[2192,216]]);
sq(2191,213.5,'OR','#b03ab0');
line(G,[[2199,212.5],[2416,212.5]]); line(G,[[2199,214],[2416,245.5]]);
const targets = [['IFNA',C.w],['IFNB1',C.w],['HLA-B',C.d],['NOS2A',C.w],['HIST2H4',C.w],['PSMB9',C.d],['GBP1','#62a3ce'],['TAP1',C.d],['CIITA',C.s1],['EIF2AK2','#accfe4'],['CXCL10',C.d],['G1P3',C.w],['OAS1','#6fabd2'],['IFIT2','#66a6cf'],['IL1B','#f3f5f7'],['CYBB','#d5e3ef'],['IRF1',C.d],['CXCL9','#6fabd2'],['ICAM1','#f6f6f6'],['G1P2',C.w]];
targets.forEach(([l,f],i) => box(2456.5, 212.2 + i*38.43, l, f));
box(2299,256,'IRF2','#86b8d9');
line(R,[[2335,247],[2421,222]]); line(R,[[2337,255],[2416,252]]); line(R,[[2337,264],[2416,281.5]]); line(R,[[2320,266],[2434,318]]);
line(K,[[2260,257],[2222,257],[2222,340]]); sq(2221,348,'OR','#b03ab0');
line(K,[[2213,346],[2175.500,346],[2175.500,632.7],[2091,632.7]]);
line(G,[[2222,357],[2222,424]]); line(K,[[2137,428],[2217,428]]); sq(2221,428,'P');
box(2099,428,'IRF8','#e0e9f2');
line(K,[[2222,430],[2222,537]]);
line(G,[[2222,538],[2241.5,289],[2416,289]]);
[366,404.7,443,481.3,519.7].forEach(y => line(G,[[2300,266],[2318,y],[2416,y]]));
box(2222,548.5,'IRF8 [P]',C.w);
line(K,[[2261,548.5],[2277,548.5],[2277,589]]); sq(2275,594,'OR','#b03ab0');
line(K,[[2205,558],[2091,630]]); line(K,[[2222,558],[2222,749.7],[2255,749.7]]);
line(G,[[2251,558],[2429,625]]); line(G,[[2284,597],[2434,663]]);
line(K,[[2014,295],[2005,328]],false);
oct(1940.3,328.7,2040,428); stack(1991,340.3,19.1,[['STAT1',C.s1],['STAT2',C.s2],['IRF9',C.d],['(ISGF3)',C.w]]);
line(K,[[2040,379],[2289,379],[2289,937]]); sq(2289,943,'OR','#b03ab0');
line(G,[[2040,392],[2079,403],[2079,711.5],[2416,711.5]]);
line(G,[[2040,392],[2079,403],[2079,600]],false);
line(G,[[2079,558],[2416,558]]); line(G,[[2079,596.5],[2416,596.5]]);
line(K,[[1990.6,428],[1990.6,593],[2270,593]]);
box(1989,614,'IRF4','#b1d0e4'); box(1989,656.2,'SPI1','#c0d8e7');
sq(2085,633.5,'&amp;','#f0981a');
line(K,[[2028,621],[2080,632]]); line(K,[[2028,647],[2080,634]]);
line(K,[[2028,656.5],[2260.500,656.5],[2260.500,745]]); sq(2258.6,750,'&amp;','#f0981a');
line(G,[[2265,750],[2416,750]]); line(G,[[2265,751],[2416,780.5]]);
line(K,[[2085,634],[2085,943],[2283,943]]); line(G,[[2297,943],[2416,943]]);
box(2142,718,'PTP',C.w); line(R,[[2142.500,727],[2142.500,780]]); sq(2140.6,783.5,'A');
oct(1944.5,742.3,2045.5,824); stack(1995,753.3,19.2,[['STAT1',C.s1],['STAT1',C.s1]]); note(1995,806.5,'[P]');
line(K,[[2045,783],[2137,783]]); line(K,[[2141,783],[2199,783],[2199,823]]);
oct(2148,824.3,2249,907.7); stack(2199,836.3,18.8,[['STAT1',C.s1],['STAT1',C.s1]]); note(2197.500,888.5,'[P][P]');
line(G,[[2249,857],[2416,833.5]]); line(G,[[2249,865],[2416,865]]); line(G,[[2249,873],[2416,898]]);

const frame = `<path d="M853 145H2509V963H853z" fill="none" stroke="#777" stroke-width="1.8"/><path d="M1060.500 145V963M1162 145V963M1921.500 145V963" stroke="#000" stroke-opacity=".56" stroke-width="3"/>`;
const titles = [[956.5,170,'Extracellular'],[956.5,190.7,'Space'],[1108.5,171.5,'Plasma'],[1108.5,192,'Membrane'],[1504.6,173,'Cytoplasm'],[2231,172.7,'Nucleus']]
  .map(([x,y,t]) => `<text x="${x}" y="${y}" font-family="Noto Sans, sans-serif" font-size="16.800" font-weight="500" letter-spacing=".15" fill="#111" text-anchor="middle">${t}</text>`).join('');
svg.innerHTML = `<g font-family="Liberation Sans, sans-serif" letter-spacing="0">${layer.oct}${frame}${layer.line}${layer.box}${layer.sq}${layer.head}${titles}</g>`;
```
